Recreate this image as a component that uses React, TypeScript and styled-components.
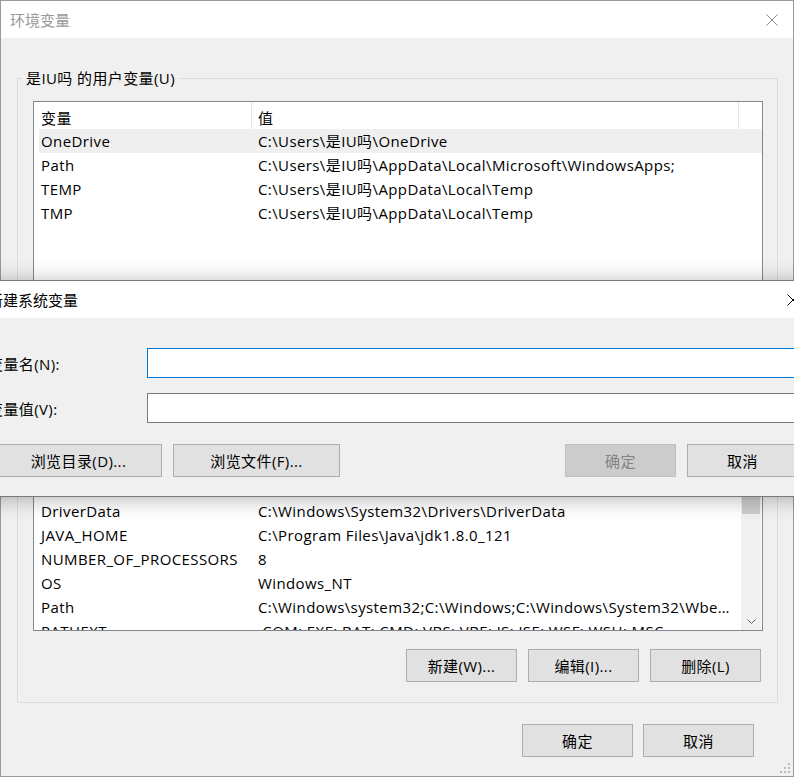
import React from 'react'
import styled, { createGlobalStyle } from 'styled-components'

const GlobalStyle = createGlobalStyle`
  html, body {
    margin: 0;
    padding: 0;
    overflow: hidden;
    background: #f0f0f0;
  }
  * {
    box-sizing: border-box;
  }
`

const uiFont = `"Open Sans", "Noto Sans CJK SC", sans-serif`

const Stage = styled.div`
  position: relative;
  width: 794px;
  height: 777px;
  overflow: hidden;
  font-family: ${uiFont};
  font-size: 15px;
  letter-spacing: 0.4px;
  color: #000;
`

const Window = styled.div`
  position: relative;
  width: 794px;
  height: 777px;
  border: 1px solid #9a9a9a;
  background: #f0f0f0;
  display: flex;
  flex-direction: column;
`

const TitleBar = styled.div<{ $active?: boolean }>`
  flex: none;
  height: 37px;
  background: #fff;
  display: flex;
  align-items: center;
  justify-content: space-between;
  padding-left: ${p => (p.$active ? 10 : 9)}px;
  color: ${p => (p.$active ? '#000' : '#999')};
  letter-spacing: 0;
  white-space: nowrap;
`

const CloseBox = styled.div`
  width: 42px;
  height: 37px;
  display: flex;
  align-items: center;
  justify-content: center;
`

const Body = styled.div`
  flex: 1;
  display: flex;
  flex-direction: column;
  padding: 30px 15px 0 16px;
`

const GroupBox = styled.fieldset<{ $gapTop?: number }>`
  margin: ${p => p.$gapTop ?? 0}px 0 0 0;
  padding: 0 14px 20px 15px;
  border: 1px solid #dcdcdc;
  min-width: 0;

  legend {
    margin-left: -11px;
    padding: 0 4px;
    line-height: 20px;
    white-space: nowrap;
  }
`

const ListBox = styled.div<{ $height: number }>`
  margin-top: 13px;
  height: ${p => p.$height}px;
  border: 1px solid #828790;
  background: #fff;
  display: flex;
  overflow: hidden;
`

const ListContent = styled.div`
  flex: 1;
  padding-left: 5px;
  display: flex;
  flex-direction: column;
  overflow: hidden;
`

const HeaderRow = styled.div`
  flex: none;
  display: grid;
  grid-template-columns: 213px 487px;
  height: 27px;
`

const HeaderCell = styled.div<{ $col: number }>`
  border-right: 1px solid #e5e5e5;
  padding: 3px 0 0 ${p => (p.$col === 0 ? 2 : 6)}px;
  display: flex;
  align-items: center;
`

const Row = styled.div<{ $selected?: boolean }>`
  flex: none;
  display: grid;
  grid-template-columns: 213px 487px;
  height: 24px;
  background: ${p => (p.$selected ? '#efefef' : 'transparent')};
`

const Cell = styled.div<{ $col: number }>`
  padding: 0 6px 0 ${p => (p.$col === 0 ? 2 : 6)}px;
  line-height: 24px;
  white-space: nowrap;
  overflow: hidden;
  text-overflow: ellipsis;
`

const ScrollBar = styled.div`
  flex: none;
  width: 20px;
  margin-right: 1px;
  background: #f0f0f0;
  display: flex;
  flex-direction: column;
`

const ScrollArrow = styled.div`
  flex: none;
  height: 17px;
  display: flex;
  align-items: center;
  justify-content: center;
`

const ScrollThumb = styled.div`
  flex: none;
  height: 73px;
  margin: 0 1px;
  background: #cdcdcd;
`

const ScrollTrack = styled.div`
  flex: 1;
`

const ButtonRow = styled.div<{ $top: number; $right?: number; $gap?: number }>`
  display: flex;
  justify-content: flex-end;
  gap: ${p => p.$gap ?? 11}px;
  margin-top: ${p => p.$top}px;
  padding-right: ${p => p.$right ?? 0}px;
`

const PushButton = styled.button<{ $w?: number }>`
  flex: none;
  width: ${p => p.$w ?? 111}px;
  height: 33px;
  padding: 0;
  border: 1px solid #adadad;
  background: #e1e1e1;
  font-family: ${uiFont};
  font-size: 15px;
  letter-spacing: inherit;
  color: #000;

  &:disabled {
    background: #cccccc;
    border-color: #bfbfbf;
    color: #838383;
  }
`

const Grip = styled.svg`
  position: absolute;
  right: 2px;
  bottom: 2px;
`

/* the modal "new system variable" dialog floating over the main window */
const Dialog = styled.div`
  position: absolute;
  top: 280px;
  left: -23px;
  width: 838px;
  border: 1px solid #7a7a7a;
  background: #f0f0f0;
  box-shadow: 0 2px 20px rgba(0, 0, 0, 0.3);
  display: flex;
  flex-direction: column;
`

const DialogBody = styled.div`
  display: flex;
  flex-direction: column;
  gap: 15px;
  padding: 30px 16px 19px 10px;
`

const FieldRow = styled.div`
  display: flex;
  align-items: center;
  height: 30px;
`

const FieldLabel = styled.label`
  flex: none;
  width: 159px;
  white-space: nowrap;
`

const TextField = styled.div<{ $focused?: boolean }>`
  flex: 1;
  height: 30px;
  background: #fff;
  border: 1px solid ${p => (p.$focused ? '#0078d7' : '#7a7a7a')};
`

const DialogButtons = styled.div`
  display: flex;
  gap: 11px;
  margin-top: 6px;
  padding-left: 7px;
`

const Spacer = styled.div`
  flex: 1;
`

type EnvVar = [string, string]

const userVars: EnvVar[] = [
  ['OneDrive', 'C:\\Users\\是IU吗\\OneDrive'],
  ['Path', 'C:\\Users\\是IU吗\\AppData\\Local\\Microsoft\\WindowsApps;'],
  ['TEMP', 'C:\\Users\\是IU吗\\AppData\\Local\\Temp'],
  ['TMP', 'C:\\Users\\是IU吗\\AppData\\Local\\Temp'],
]

const systemVars: EnvVar[] = [
  ['CLASSPATH', '.;%JAVA_HOME%\\lib;%JAVA_HOME%\\lib\\tools.jar'],
  ['ComSpec', 'C:\\Windows\\system32\\cmd.exe'],
  ['DriverData', 'C:\\Windows\\System32\\Drivers\\DriverData'],
  ['JAVA_HOME', 'C:\\Program Files\\Java\\jdk1.8.0_121'],
  ['NUMBER_OF_PROCESSORS', '8'],
  ['OS', 'Windows_NT'],
  ['Path', 'C:\\Windows\\system32;C:\\Windows;C:\\Windows\\System32\\Wbem;C:\\Windows\\System32\\WindowsPowerShell\\v1.0\\'],
  ['PATHEXT', '.COM;.EXE;.BAT;.CMD;.VBS;.VBE;.JS;.JSE;.WSF;.WSH;.MSC'],
  ['PROCESSOR_ARCHITECTURE', 'AMD64'],
]

function CloseIcon({ color }: { color: string }) {
  return (
    <svg width="12" height="12" viewBox="0 0 12 12">
      <path d="M0.5 0.5 L11.5 11.5 M11.5 0.5 L0.5 11.5" stroke={color} strokeWidth="1" fill="none" />
    </svg>
  )
}

function VarList({ rows, height, selected, scroll }: { rows: EnvVar[]; height: number; selected?: number; scroll?: boolean }) {
  return (
    <ListBox $height={height}>
      <ListContent>
        <HeaderRow>
          <HeaderCell $col={0}>变量</HeaderCell>
          <HeaderCell $col={1}>值</HeaderCell>
        </HeaderRow>
        {rows.map(([name, value], i) => (
          <Row key={name + i} $selected={i === selected}>
            <Cell $col={0}>{name}</Cell>
            <Cell $col={1}>{value}</Cell>
          </Row>
        ))}
      </ListContent>
      {scroll && (
        <ScrollBar>
          <ScrollArrow>
            <svg width="9" height="5" viewBox="0 0 9 5">
              <path d="M0.5 4.5 L4.5 0.5 L8.5 4.5" stroke="#606060" fill="none" />
            </svg>
          </ScrollArrow>
          <ScrollThumb />
          <ScrollTrack />
          <ScrollArrow>
            <svg width="9" height="5" viewBox="0 0 9 5">
              <path d="M0.5 0.5 L4.5 4.5 L8.5 0.5" stroke="#606060" fill="none" />
            </svg>
          </ScrollArrow>
        </ScrollBar>
      )}
    </ListBox>
  )
}

export default function App() {
  return (
    <Stage>
      <GlobalStyle />
      <Window>
        <TitleBar>
          <span>环境变量</span>
          <CloseBox>
            <CloseIcon color="#8a8a8a" />
          </CloseBox>
        </TitleBar>
        <Body>
          <GroupBox>
            <legend>是IU吗 的用户变量(U)</legend>
            <VarList rows={userVars} height={200} selected={0} />
            <ButtonRow $top={10} $right={2}>
              <PushButton>新建(N)...</PushButton>
              <PushButton>编辑(E)...</PushButton>
              <PushButton>删除(D)</PushButton>
            </ButtonRow>
          </GroupBox>
          <GroupBox $gapTop={25}>
            <legend>系统变量(S)</legend>
            <VarList rows={systemVars} height={208} scroll />
            <ButtonRow $top={18} $right={2}>
              <PushButton>新建(W)...</PushButton>
              <PushButton>编辑(I)...</PushButton>
              <PushButton>删除(L)</PushButton>
            </ButtonRow>
          </GroupBox>
          <ButtonRow $top={21} $right={24} $gap={10}>
            <PushButton>确定</PushButton>
            <PushButton>取消</PushButton>
          </ButtonRow>
        </Body>
        <Grip width="12" height="12" viewBox="0 0 12 12">
          {[[9, 1], [9, 5], [5, 5], [9, 9], [5, 9], [1, 9]].map(([x, y]) => (
            <rect key={`${x}-${y}`} x={x} y={y} width="2" height="2" fill="#bcbcbc" />
          ))}
        </Grip>
      </Window>

      <Dialog>
        <TitleBar $active>
          <span>新建系统变量</span>
          <CloseBox>
            <CloseIcon color="#000" />
          </CloseBox>
        </TitleBar>
        <DialogBody>
          <FieldRow>
            <FieldLabel>变量名(N):</FieldLabel>
            <TextField $focused />
          </FieldRow>
          <FieldRow>
            <FieldLabel>变量值(V):</FieldLabel>
            <TextField />
          </FieldRow>
          <DialogButtons>
            <PushButton $w={167}>浏览目录(D)...</PushButton>
            <PushButton $w={167}>浏览文件(F)...</PushButton>
            <Spacer />
            <PushButton disabled>确定</PushButton>
            <PushButton>取消</PushButton>
          </DialogButtons>
        </DialogBody>
      </Dialog>
    </Stage>
  )
}
